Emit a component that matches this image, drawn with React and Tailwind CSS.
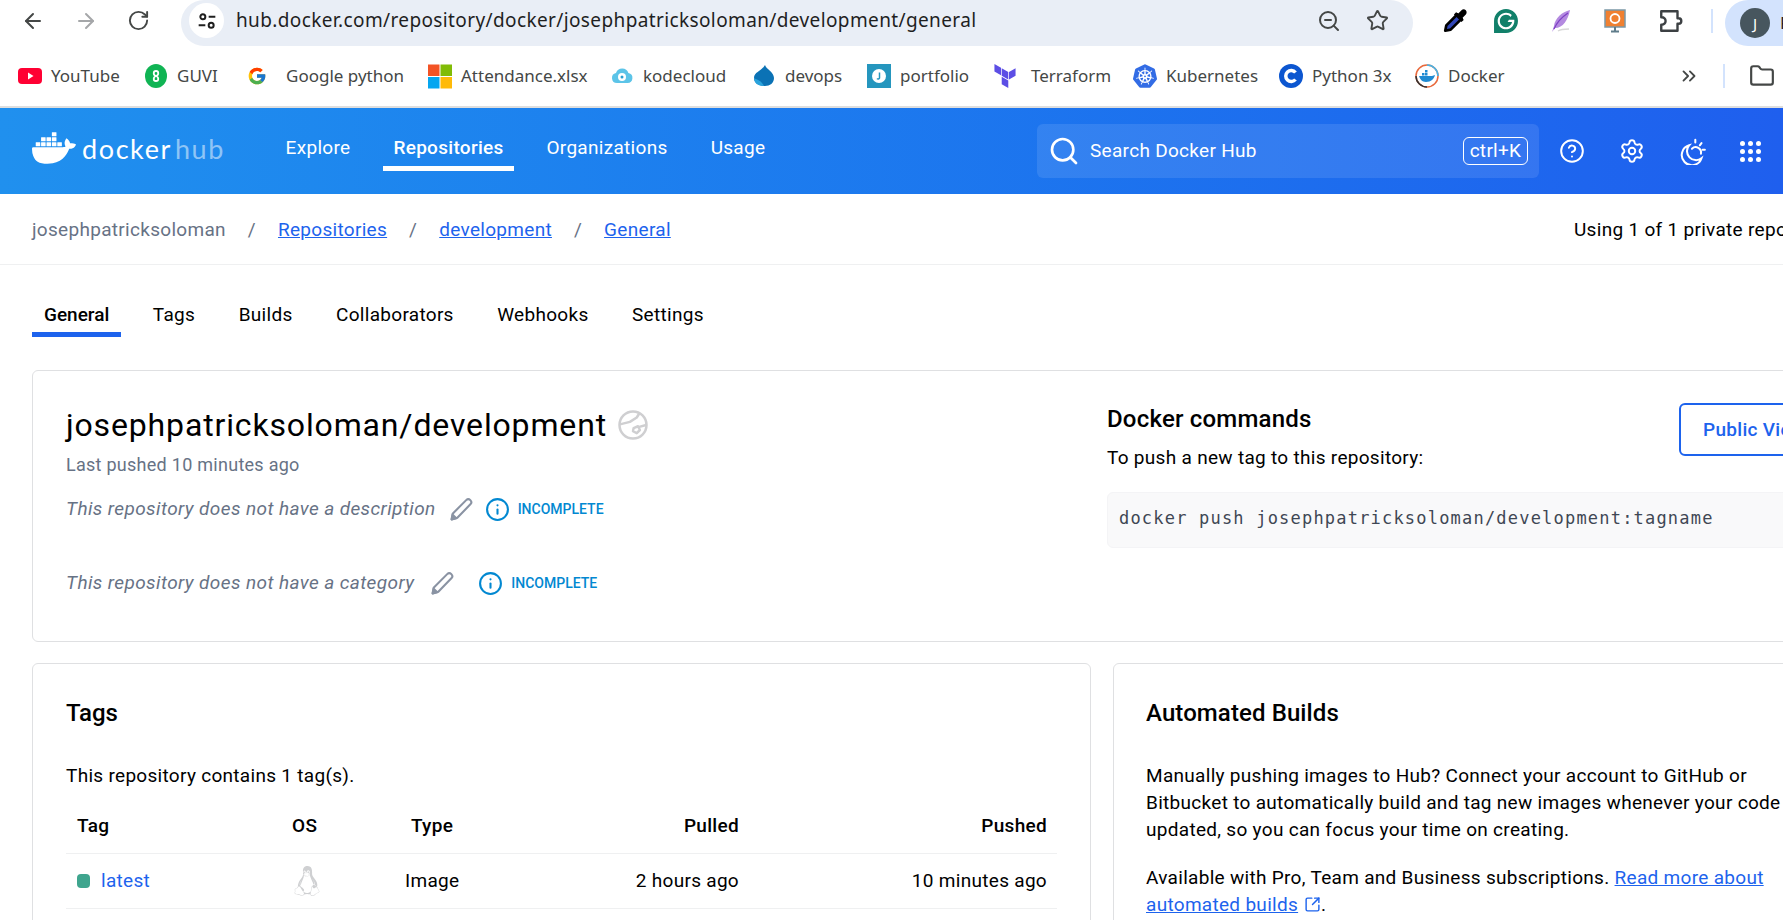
import React from 'react';
import {
  ArrowLeft, ArrowRight, RotateCw, ZoomOut, Star, Folder, ChevronsRight, Search,
  CircleHelp, Settings, Info, SquareArrowOutUpRight,
} from 'lucide-react';
import { SiDocker, SiKubernetes, SiTerraform, SiGrammarly } from 'react-icons/si';
import { FcGoogle } from 'react-icons/fc';
import { FaLinux } from 'react-icons/fa';

const YoutubeIcon = () => (
  <svg width="24" height="24" viewBox="0 0 24 24">
    <rect x="0" y="4" width="24" height="16" rx="4" fill="#ff0033" />
    <path d="M10 8.500v7l5.500-3.500z" fill="#fff" />
  </svg>
);

const GuviIcon = () => (
  <svg width="24" height="24" viewBox="0 0 24 24">
    <ellipse cx="12" cy="12" rx="11" ry="12" fill="#10b454" />
    <path d="M12 12c-3-1-3-5 0-5s3 4 0 5zm0 0c3 1 3 5 0 5s-3-4 0-5z" fill="none" stroke="#fff" strokeWidth="1.800" />
  </svg>
);

const MicrosoftIcon = () => (
  <svg width="25" height="25" viewBox="0 0 24 24">
    <rect width="11.500" height="11.500" fill="#f35325" />
    <rect x="12.500" width="11.500" height="11.500" fill="#81bc06" />
    <rect y="12.500" width="11.500" height="11.500" fill="#05a6f0" />
    <rect x="12.500" y="12.500" width="11.500" height="11.500" fill="#ffba08" />
  </svg>
);

const KodeCloudIcon = () => (
  <svg width="25" height="24" viewBox="0 0 24 24">
    <path d="M7 19a5 5 0 0 1-1-9.900 6.500 6.500 0 0 1 12.400 0A5 5 0 0 1 17.500 19z" fill="#5cc4e8" />
    <circle cx="12" cy="13" r="4" fill="#fff" />
    <circle cx="12" cy="13" r="1.500" fill="#2b9fd0" />
  </svg>
);

const DevopsIcon = () => (
  <svg width="25" height="26" viewBox="0 0 24 24">
    <path d="M13 1c1 4 9 7 9 13 0 5-4 8-9 8-6 0-11-3-11-8 0-6 8-7 11-13z" fill="#0b72b5" />
    <path d="M2 14c3 2 7 2 10 8-6 0-10-3-10-8z" fill="#2aa3dc" />
  </svg>
);

const PortfolioIcon = () => (
  <svg width="24" height="24" viewBox="0 0 24 24">
    <rect width="24" height="24" fill="#2596be" />
    <circle cx="12" cy="12" r="7" fill="#fff" />
    <path d="M12.500 8.500v5.500a1.500 1.500 0 0 1-2.500 0.500" fill="none" stroke="#2596be" strokeWidth="1.500" />
  </svg>
);

const PythonCIcon = () => (
  <svg width="24" height="24" viewBox="0 0 24 24">
    <circle cx="12" cy="12" r="12" fill="#0c56d0" />
    <path d="M16.500 8.500a5.500 5.500 0 1 0 0 7" fill="none" stroke="#fff" strokeWidth="3.500" />
  </svg>
);

const DockerRingIcon = () => (
  <svg width="26" height="26" viewBox="0 0 24 24">
    <circle cx="12" cy="12" r="11" fill="#fff" stroke="#e8693c" strokeWidth="1.500" />
    <path d="M12 23a11 11 0 0 1-11-11" fill="none" stroke="#333" strokeWidth="1.500" />
    <path d="M12 1a11 11 0 0 1 11 11" fill="none" stroke="#45b4e8" strokeWidth="1.500" />
    <path d="M4 12h13c1 0 2-1 3-1-1 4-4 7-9 7-4 0-6-3-7-6z" fill="#1f8ad2" />
    <path d="M7 9h2.500v2.500H7zM10 9h2.500v2.500H10zM10 6h2.500v2.500H10z" fill="#1f8ad2" />
  </svg>
);

const EyedropperIcon = () => (
  <svg width="26" height="28" viewBox="0 0 24 24">
    <path d="M3 21l1-5L14 6l4 4L8 20z" fill="#3147b8" stroke="#000" strokeWidth="2.500" strokeLinejoin="round" />
    <path d="M13 4l2 1 3-3c1-1 3-1 4 0s1 3 0 4l-3 3 1 2-2 2-7-7z" fill="#000" />
  </svg>
);

const FeatherIcon = () => (
  <svg width="24" height="28" viewBox="0 0 24 24">
    <path d="M21 1C13 3 6 9 5 17l-2 6 3-4c8 0 13-8 15-18z" fill="#b48ae0" />
    <path d="M19 4C13 8 8 13 5 20" fill="none" stroke="#7d3fc4" strokeWidth="1.200" />
    <path d="M9 22c3-2 7-2 11-2" fill="none" stroke="#d8d8d8" strokeWidth="1.500" />
  </svg>
);

const UbuntuMonitorIcon = () => (
  <svg width="24" height="26" viewBox="0 0 24 24">
    <rect x="2" y="1" width="20" height="17" fill="#f08030" stroke="#7b98a6" strokeWidth="1.500" />
    <circle cx="12" cy="9.500" r="4.500" fill="none" stroke="#fff" strokeWidth="1.800" />
    <path d="M8 22.500h8M12 18v4" stroke="#5f7c8a" strokeWidth="2" />
  </svg>
);

const ExtensionIcon = () => (
  <svg width="26" height="26" viewBox="0 0 24 24" fill="none" stroke="#3c4043" strokeWidth="2.200" strokeLinejoin="round">
    <path d="M3 3H18V9.500h1a2.500 2.500 0 0 1 0 5h-1V21H3V15.500h0.500a3.500 3.500 0 0 0 0-7H3Z" />
  </svg>
);

const MoonSunIcon = () => (
  <svg width="27" height="27" viewBox="0 0 24 24" fill="none" stroke="#fff" strokeWidth="1.800" strokeLinecap="round">
    <path d="M9 6.500A9 9 0 1 0 20 18a8 8 0 0 1-11-11.500z" />
    <path d="M11.500 9.500a4.800 4.800 0 0 1 8 4.500" />
    <path d="M14.500 1.500v2.500M20 4.500l-1.500 2M23 10.500h-2" />
  </svg>
);

const GlobeIcon = () => (
  <svg width="30" height="30" viewBox="0 0 24 24" fill="none" stroke="#cfcfd1" strokeWidth="2" strokeLinejoin="round">
    <circle cx="12" cy="12" r="10.800" />
    <path d="M17.500 2 15 6 9.500 9.500 1.500 11.500" />
    <path d="M12.500 14.500l3.500-1.500 1.500 3-2.500 2.500-3-1.500zM17 13.500l5.500-1.500" />
  </svg>
);

const PencilIcon = () => (
  <svg width="25" height="25" viewBox="0 0 24 24" fill="none" stroke="#8a93a3" strokeWidth="2" strokeLinejoin="round">
    <path d="M2.500 21.500 3.500 16 16.500 3a2.800 2.800 0 0 1 4 4L8 20z" />
    <path d="M2.500 21.500 3.500 17 7 20.500z" fill="#8a93a3" />
  </svg>
);

const AppsIcon = () => (
  <div className="grid grid-cols-3 gap-[3px]">
    {[1, 2, 3, 4, 5, 6, 7, 8, 9].map((dot) => (
      <span key={dot} className="w-[5px] h-[5px] rounded-full bg-white" />
    ))}
  </div>
);

const bookmarks = [
  { name: 'YouTube', icon: <YoutubeIcon />, gap: 'gap-[9px]', width: 'w-[126px]' },
  { name: 'GUVI', icon: <GuviIcon />, gap: 'gap-[9px]', width: 'w-[101px]' },
  { name: 'Google python', icon: <FcGoogle size={20} />, gap: 'gap-[17px]', width: 'w-[183px]' },
  { name: 'Attendance.xlsx', icon: <MicrosoftIcon />, gap: 'gap-[9px]', width: 'w-[182px]' },
  { name: 'kodecloud', icon: <KodeCloudIcon />, gap: 'gap-[9px]', width: 'w-[142px]' },
  { name: 'devops', icon: <DevopsIcon />, gap: 'gap-[9px]', width: 'w-[115px]' },
  { name: 'portfolio', icon: <PortfolioIcon />, gap: 'gap-[9px]', width: 'w-[126px]' },
  { name: 'Terraform', icon: <SiTerraform size={24} color="#5c4ee5" />, gap: 'gap-[14px]', width: 'w-[140px]' },
  { name: 'Kubernetes', icon: <SiKubernetes size={24} color="#326ce5" />, gap: 'gap-[9px]', width: 'w-[146px]' },
  { name: 'Python 3x', icon: <PythonCIcon />, gap: 'gap-[9px]', width: 'w-[136px]' },
  { name: 'Docker', icon: <DockerRingIcon />, gap: 'gap-[9px]', width: 'w-[120px]' },
];

const navLinks = [
  { label: 'Explore', width: 'w-[66px]' },
  { label: 'Repositories', active: true, width: 'w-[131px]' },
  { label: 'Organizations', width: 'w-[122px]' },
  { label: 'Usage', width: 'w-[54px] ml-[11px]' },
];

const tabs = ['General', 'Tags', 'Builds', 'Collaborators', 'Webhooks', 'Settings'];

function BrowserChrome() {
  return (
    <div className="font-['Noto_Sans',sans-serif] text-[#1f1f1f]">
      <div className="flex items-start h-[46px]">
        <div className="flex items-center w-[181px] h-[46px] pb-[5px] pl-[21px] gap-[29px]">
          <ArrowLeft size={24} strokeWidth={2} color="#444746" />
          <ArrowRight size={24} strokeWidth={2} color="#a5a7a9" />
          <RotateCw size={23} strokeWidth={2} color="#444746" />
        </div>
        <div className="flex items-center w-[1232px] h-[46px] pb-[5px] bg-[#e9eef6] rounded-[24px] pl-2 pr-[24px]">
          <div className="w-[35px] h-[35px] rounded-full bg-white flex items-center justify-center">
            <svg width="20" height="20" viewBox="0 0 24 24" fill="none" stroke="#1f1f1f" strokeWidth="2.400">
              <circle cx="7" cy="7" r="3" />
              <path d="M14 7h8M2 17h8" />
              <circle cx="17" cy="17" r="3" />
            </svg>
          </div>
          <span className="ml-3 text-[19px] tracking-[0.38px]">hub.docker.com/repository/docker/josephpatricksoloman/development/general</span>
          <div className="ml-auto flex items-center gap-[25px]">
            <ZoomOut size={24} strokeWidth={2} color="#444746" />
            <Star size={23} strokeWidth={2} color="#444746" />
          </div>
        </div>
        <div className="flex items-center h-[46px] pb-[5px] ml-[29px]">
          <EyedropperIcon />
          <span className="ml-[26px]"><SiGrammarly size={24} color="#11806a" /></span>
          <span className="ml-[31px]"><FeatherIcon /></span>
          <span className="ml-[30px]"><UbuntuMonitorIcon /></span>
          <span className="ml-[31px]"><ExtensionIcon /></span>
        </div>
        <div className="ml-[27px] mt-[9px] w-[2px] h-6 bg-[#d3e3fd]" />
        <div className="ml-[12px] flex-1 h-[46px] bg-[#d3e3fd] rounded-l-[23px] flex items-center pl-[15px] overflow-hidden">
          <div className="w-[30px] h-[30px] rounded-full bg-[#47565e] text-white text-[15px] flex items-center justify-center shrink-0">J</div>
          <span className="ml-[10px] text-[17px]">P</span>
        </div>
      </div>
      <div className="flex items-center h-[60px] pl-[18px] text-[17px] text-[#444746] whitespace-nowrap">
        {bookmarks.map((b) => (
          <div key={b.name} className={`flex items-center shrink-0 ${b.gap} ${b.width}`}>
            <span className="flex items-center justify-center w-6 shrink-0">{b.icon}</span>
            <span>{b.name}</span>
          </div>
        ))}
        <ChevronsRight size={22} strokeWidth={2} color="#444746" className="ml-[143px]" />
        <div className="ml-[23px] w-[2px] h-6 bg-[#d3e3fd]" />
        <Folder size={26} strokeWidth={2} color="#444746" className="ml-6 shrink-0" />
      </div>
      <div className="h-[2px] bg-[#dedede]" />
    </div>
  );
}

function DockerHeader() {
  return (
    <header className="flex items-center h-[86px] bg-gradient-to-r from-[#2090ee] to-[#1f5fee] text-white text-[19px] tracking-[0.3px]">
      <div className="flex items-center w-[285px] pl-8 pb-[6px]">
        <SiDocker size={44} color="#fff" />
        <span className="ml-[6px] font-['Lato',sans-serif] text-[27px] leading-none tracking-[1.6px]">
          docker<span className="ml-[3px] text-white/50">hub</span>
        </span>
      </div>
      <nav className="flex items-center h-full gap-[32px] font-['Roboto',sans-serif]">
        {navLinks.map((link) => (
          <div key={link.label} className={`relative flex items-center justify-center h-full pb-[6px] whitespace-nowrap ${link.width} ${link.active ? 'font-medium' : ''}`}>
            {link.label}
            {link.active && <span className="absolute left-0 right-0 top-[58px] h-[5px] bg-white" />}
          </div>
        ))}
      </nav>
      <div className="ml-[272px] flex items-center w-[502px] h-[54px] rounded-md bg-white/10 px-[11px] font-['Roboto',sans-serif]">
        <Search size={32} strokeWidth={2} />
        <span className="ml-[10px] pt-[1px]">Search Docker Hub</span>
        <span className="ml-auto h-[28px] w-[65px] flex items-center justify-center border border-white rounded-md">ctrl+K</span>
      </div>
      <div className="ml-[20px] flex items-center gap-[34px]">
        <CircleHelp size={26} strokeWidth={1.800} />
        <Settings size={26} strokeWidth={1.800} />
        <MoonSunIcon />
        <AppsIcon />
      </div>
    </header>
  );
}

function Breadcrumb() {
  return (
    <div className="flex items-center h-[71px] pt-[2px] pl-8 border-b border-[#eff0f1] text-[19px] tracking-[0.3px] whitespace-nowrap">
      <span className="text-[#677285]">josephpatricksoloman</span>
      <span className="ml-[22px] text-[#677285]">/</span>
      <a className="ml-[22px] text-[#1d63ed] underline">Repositories</a>
      <span className="ml-[22px] text-[#677285]">/</span>
      <a className="ml-[22px] text-[#1d63ed] underline">development</a>
      <span className="ml-[22px] text-[#677285]">/</span>
      <a className="ml-[22px] text-[#1d63ed] underline">General</a>
      <span className="absolute left-[1574px] text-black">Using 1 of 1 private repositories.</span>
    </div>
  );
}

function Tabs() {
  return (
    <div className="flex gap-[19.5px] pl-8 mt-[25px] text-[19px] tracking-[0.3px] h-[47px]">
      {tabs.map((tab, i) => (
        <div key={tab} className={`px-3 pt-[11px] h-[47px] text-black ${i === 0 ? 'font-medium tracking-normal border-b-[5px] border-[#1d63ed]' : ''}`}>
          {tab}
        </div>
      ))}
    </div>
  );
}

function Incomplete() {
  return (
    <span className="flex items-center gap-[8px] text-[#0288d1] text-[14px] font-medium tracking-normal">
      <Info size={25} strokeWidth={2} />
      <span className="pt-[1px]">INCOMPLETE</span>
    </span>
  );
}

function RepoCard() {
  return (
    <section className="flex w-[1900px] h-[272px] mt-[33px] border border-[#dfe0e2] rounded-md">
      <div className="w-[1074px] pl-[33px] pt-[32px]">
        <div className="flex items-center gap-[11px]">
          <h1 className="text-[32px] leading-[44px] text-black tracking-[0.85px]">josephpatricksoloman/development</h1>
          <GlobeIcon />
        </div>
        <p className="mt-[4px] text-[18px] tracking-[0.27px] leading-[27px] text-[#677285]">Last pushed 10 minutes ago</p>
        <div className="flex items-center h-[28px] mt-[17px] text-[19px] tracking-[0.4px] italic text-[#677285]">
          This repository does not have a description
          <span className="ml-[13px]"><PencilIcon /></span>
          <span className="ml-[11px] not-italic"><Incomplete /></span>
        </div>
        <div className="flex items-center h-[28px] mt-[46px] text-[19px] tracking-[0.4px] italic text-[#677285]">
          This repository does not have a category
          <span className="ml-[16px]"><PencilIcon /></span>
          <span className="ml-[23px] not-italic"><Incomplete /></span>
        </div>
      </div>
      <div className="relative flex-1 pt-[33px]">
        <h2 className="text-[24px] tracking-[0.2px] leading-[30px] font-medium text-black">Docker commands</h2>
        <p className="mt-[10px] text-[19px] tracking-[0.3px] leading-[27px] text-black">To push a new tag to this repository:</p>
        <div className="mt-[21px] flex items-center h-[56px] w-[760px] pl-[11px] pb-[2px] rounded-md bg-[#f9f9fa] border border-[#f4f4f6] font-['DejaVu_Sans_Mono',monospace] text-[17px] tracking-[1.200px] text-[#3f4754]">
          docker push josephpatricksoloman/development:tagname
        </div>
        <button className="absolute left-[572px] top-[32px] h-[53px] w-[200px] text-left pl-[22px] pt-[1px] border-2 border-[#1d63ed] rounded-md text-[19px] tracking-[0.3px] font-medium text-[#1d63ed]">
          Public View
        </button>
      </div>
    </section>
  );
}

function TagsCard() {
  return (
    <section className="w-[1059px] h-[300px] shrink-0 border border-[#dfe0e2] rounded-md pl-[33px] pr-[33px] pt-[33px]">
      <h2 className="text-[24px] leading-[32px] font-medium text-black">Tags</h2>
      <p className="mt-[33px] text-[19px] tracking-[0.3px] leading-[27px] text-black">This repository contains 1 tag(s).</p>
      <div className="mt-[11px] text-[19px] tracking-[0.3px] text-black">
        <div className="grid grid-cols-[215px_113px_54px_280px_308px] items-center h-[54px] pl-[11px] border-b border-[#eff0f1] font-medium">
          <span>Tag</span>
          <span>OS</span>
          <span className="text-center">Type</span>
          <span className="text-right">Pulled</span>
          <span className="text-right">Pushed</span>
        </div>
        <div className="grid grid-cols-[215px_113px_54px_280px_308px] items-center h-[55px] pl-[11px] border-b border-[#eff0f1]">
          <span className="flex items-center gap-[11px]">
            <span className="w-[13px] h-[14px] rounded-[4px] bg-[#3fa58e]" />
            <a className="text-[#1d63ed]">latest</a>
          </span>
          <FaLinux size={30} color="#cfd0d2" />
          <span className="text-center whitespace-nowrap">Image</span>
          <span className="text-right">2 hours ago</span>
          <span className="text-right">10 minutes ago</span>
        </div>
      </div>
    </section>
  );
}

function BuildsCard() {
  return (
    <section className="w-[800px] h-[300px] shrink-0 border border-[#dfe0e2] rounded-md pl-[32px] pt-[33px] text-[19px] tracking-[0.3px] text-black">
      <h2 className="text-[24px] tracking-[0.1px] leading-[32px] font-medium">Automated Builds</h2>
      <p className="mt-[33px] leading-[27px] w-[670px]">
        Manually pushing images to Hub? Connect your account to GitHub or Bitbucket to automatically build and tag new images whenever your code is updated, so you can focus your time on creating.
      </p>
      <p className="mt-[21px] leading-[27px] w-[670px]">
        Available with Pro, Team and Business subscriptions.{' '}
        <a className="text-[#1d63ed] underline">
          Read more about automated builds
          <SquareArrowOutUpRight size={17} strokeWidth={2} className="inline ml-[6px] align-[-2px]" />
        </a>
        .
      </p>
    </section>
  );
}

export default function App() {
  return (
    <div className="relative w-[1783px] h-[920px] overflow-hidden bg-white font-['Roboto',sans-serif]">
      <BrowserChrome />
      <DockerHeader />
      <Breadcrumb />
      <Tabs />
      <div className="pl-8">
        <RepoCard />
        <div className="flex gap-[22px] mt-[21px]">
          <TagsCard />
          <BuildsCard />
        </div>
      </div>
    </div>
  );
}
